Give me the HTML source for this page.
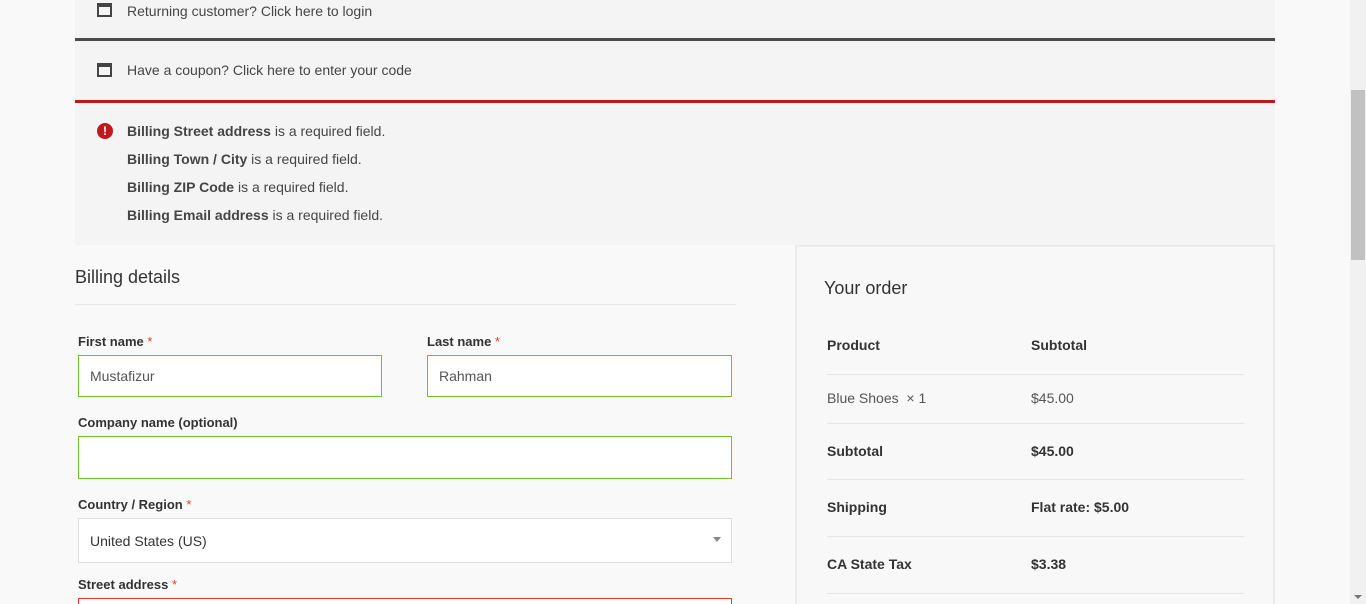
<!DOCTYPE html>
<html style="height:604px;overflow:hidden"><head><style>
*{box-sizing:border-box;margin:0;padding:0}
html,body{width:1366px;height:604px;overflow:hidden}
body{background:#f9f9f9;font-family:"Liberation Sans",sans-serif;color:#404040;position:relative}
.n{position:absolute;left:75px;width:1200px;background:#f4f4f4}
.ic{position:absolute;left:22px;width:15px;height:14px;border:2px solid #444;border-top-width:4px}
.t{position:absolute;left:52px;font-size:14px;color:#454545}
.sb{position:absolute;left:1350px;top:0;width:16px;height:604px;background:#f1f1f1}
.th{position:absolute;left:1351px;top:90px;width:14px;height:170px;background:#c1c1c1}
label{position:absolute;font-size:13px;font-weight:bold;color:#333}
label i{color:#e2401c;font-style:normal;font-weight:normal}
.in{position:absolute;background:#fff;border:1px solid #6dc22e;font-size:14px;color:#555;padding-left:11px;display:flex;align-items:center}
.ob{position:absolute;left:795px;top:245px;width:480px;height:359px;border:2px solid #ececec;border-bottom:0;background:#f8f8f8}
.r{position:absolute;left:30px;width:417px;border-bottom:1px solid #e6e6e6;font-size:14px;color:#333}
.r span{position:absolute;top:0}
</style></head><body>
<div class="n" style="top:0;height:41px;border-bottom:3px solid #4a4a4a"><div class="ic" style="top:3px"></div><div class="t" style="top:3px">Returning customer? Click here to login</div></div>
<div class="n" style="top:41px;height:62px;border-bottom:3px solid #c0181c"><div class="ic" style="top:22px"></div><div class="t" style="top:21px">Have a coupon? Click here to enter your code</div></div>
<div class="n" style="top:103px;height:142px">
<div style="position:absolute;left:22px;top:20px;width:16px;height:16px;border-radius:50%;background:#c0181c;color:#fff;font-size:12px;font-weight:bold;text-align:center;line-height:16px">!</div>
<div class="t" style="top:14px;line-height:28px"><b>Billing Street address</b> is a required field.<br><b>Billing Town / City</b> is a required field.<br><b>Billing ZIP Code</b> is a required field.<br><b>Billing Email address</b> is a required field.</div></div>
<div style="position:absolute;left:75px;top:267px;font-size:18px;color:#333">Billing details</div>
<div style="position:absolute;left:75px;top:304px;width:661px;border-top:1px solid #e6e6e6"></div>
<label style="left:78px;top:334px">First name <i>*</i></label>
<label style="left:427px;top:334px">Last name <i>*</i></label>
<div class="in" style="left:78px;top:355px;width:304px;height:42px">Mustafizur</div>
<div class="in" style="left:427px;top:355px;width:305px;height:42px">Rahman</div>
<label style="left:78px;top:415px">Company name (optional)</label>
<div class="in" style="left:78px;top:436px;width:654px;height:43px"></div>
<label style="left:78px;top:497px">Country / Region <i>*</i></label>
<div class="in" style="left:78px;top:518px;width:654px;height:45px;border-color:#ddd;color:#333">United States (US)<span style="position:absolute;right:10px;top:18px;border:4px solid transparent;border-top:5px solid #888"></span></div>
<label style="left:78px;top:577px">Street address <i>*</i></label>
<div class="in" style="left:78px;top:598px;width:654px;height:6px;border-color:#e2401c;border-bottom:0"></div>
<div class="ob">
<div style="position:absolute;left:27px;top:31px;font-size:18px;color:#333">Your order</div>
<div class="r" style="top:90px;height:38px;font-weight:bold"><span>Product</span><span style="left:204px">Subtotal</span></div>
<div class="r" style="top:143px;height:34px;color:#555"><span>Blue Shoes &nbsp;× 1</span><span style="left:204px">$45.00</span></div>
<div class="r" style="top:196px;height:37px;font-weight:bold"><span>Subtotal</span><span style="left:204px">$45.00</span></div>
<div class="r" style="top:252px;height:38px;font-weight:bold"><span>Shipping</span><span style="left:204px">Flat rate: $5.00</span></div>
<div class="r" style="top:309px;height:38px;font-weight:bold"><span>CA State Tax</span><span style="left:204px">$3.38</span></div>
</div>
<div class="sb"></div><div class="th"></div>
<div style="position:absolute;left:1354px;top:595px;border:4px solid transparent;border-top:4px solid #777"></div>
</body></html>
